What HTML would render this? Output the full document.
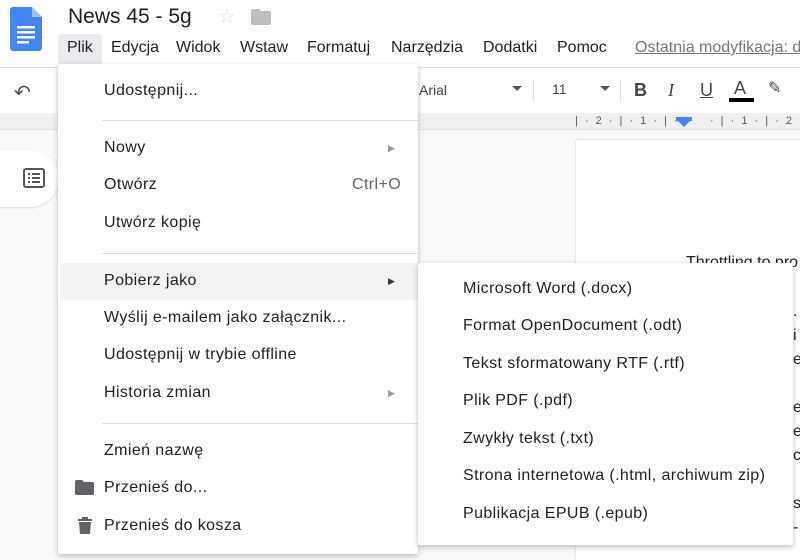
<!DOCTYPE html>
<html><head><meta charset="utf-8"><style>
*{margin:0;padding:0;box-sizing:border-box}
body{width:800px;height:547px;overflow:hidden;position:relative;background:#f8f9fa;font-family:"Liberation Sans",Arial,sans-serif;color:#202124}
.abs{position:absolute}
.top{left:0;top:0;width:800px;height:67px;background:#fff}
.tb{left:0;top:67px;width:800px;height:46px;background:#fff;border-top:1px solid #dadce0}
.ruler{left:0;top:113px;width:800px;height:17px;background:#eef0f1;border-bottom:1px solid #e0e0e0}
.page{left:576px;top:140px;width:230px;height:420px;background:#fff;box-shadow:0 0 2px #ccc}
.menu{background:#fff;box-shadow:0 2px 6px rgba(0,0,0,.25);border-radius:2px}
.it{position:absolute;font-size:16px;letter-spacing:0.4px;color:#202124;white-space:nowrap}
.sep{position:absolute;height:1px;background:#dadce0}
.mb{position:absolute;top:39px;font-size:16px;color:#202124;white-space:nowrap}
.arr{position:absolute;font-size:9px;color:#999}
</style></head><body>
<div class="abs top"></div>
<svg class="abs" style="left:10px;top:7px" width="32" height="44" viewBox="0 0 32 44"><path d="M3 0h19l10 10v31a3 3 0 0 1-3 3H3a3 3 0 0 1-3-3V3a3 3 0 0 1 3-3z" fill="#4285f4"/><path d="M22 0v10h10z" fill="#a1c2fa"/><rect x="7" y="19" width="18" height="2.5" fill="#fff"/><rect x="7" y="24" width="18" height="2.5" fill="#fff"/><rect x="7" y="29" width="18" height="2.5" fill="#fff"/><rect x="7" y="34" width="12" height="2.5" fill="#fff"/></svg>
<div class="abs" style="left:68px;top:5px;font-size:21px;color:#202124;white-space:nowrap">News 45 - 5g</div>
<div class="abs" style="left:218px;top:4px;font-size:20px;color:#ddd">☆</div>
<svg class="abs" style="left:251px;top:9px" width="20" height="16"><path d="M0 2a2 2 0 0 1 2-2h6l2 2h8a2 2 0 0 1 2 2v10a2 2 0 0 1-2 2H2a2 2 0 0 1-2-2z" fill="#bdbdbd"/></svg>
<div class="abs" style="left:58px;top:34px;width:44px;height:32px;background:#e8eaed;border-radius:3px 3px 0 0"></div>
<div class="mb" style="left:67px">Plik</div>
<div class="mb" style="left:111px">Edycja</div>
<div class="mb" style="left:176px">Widok</div>
<div class="mb" style="left:240px">Wstaw</div>
<div class="mb" style="left:307px">Formatuj</div>
<div class="mb" style="left:391px">Narzędzia</div>
<div class="mb" style="left:483px">Dodatki</div>
<div class="mb" style="left:557px">Pomoc</div>
<div class="mb" style="left:635px;color:#777;text-decoration:underline">Ostatnia modyfikacja: dzisiaj</div>
<div class="abs tb"></div>
<div class="abs" style="left:14px;top:80px;font-size:20px;color:#555">↶</div>
<div class="abs" style="left:419px;top:82px;font-size:14px;color:#444">Arial</div>
<div class="abs" style="left:512px;top:86px;border:5px solid transparent;border-top-color:#555"></div>
<div class="abs" style="left:533px;top:80px;width:1px;height:22px;background:#ddd"></div>
<div class="abs" style="left:552px;top:81px;font-size:14px;color:#444">11</div>
<div class="abs" style="left:600px;top:86px;border:5px solid transparent;border-top-color:#555"></div>
<div class="abs" style="left:620px;top:80px;width:1px;height:22px;background:#ddd"></div>
<div class="abs" style="left:634px;top:80px;font-size:18px;font-weight:bold;color:#444">B</div>
<div class="abs" style="left:668px;top:80px;font-size:18px;font-style:italic;color:#444;font-family:'Liberation Serif',serif">I</div>
<div class="abs" style="left:700px;top:80px;font-size:18px;text-decoration:underline;color:#444">U</div>
<div class="abs" style="left:734px;top:78px;font-size:18px;color:#444">A</div>
<div class="abs" style="left:729px;top:98px;width:25px;height:4px;background:#000"></div>
<div class="abs" style="left:768px;top:78px;font-size:16px;color:#444">✎</div>
<div class="abs ruler"></div>
<div class="abs" style="left:575px;top:115px;font-size:11px;color:#555;letter-spacing:2px;white-space:nowrap">| · 2 · | · 1 · | · &nbsp;&nbsp;&nbsp;&nbsp; · | · 1 · | · 2 · |</div>
<div class="abs" style="left:676px;top:117px;width:16px;height:4px;background:#4285f4"></div>
<div class="abs" style="left:678px;top:121px;border:6px solid transparent;border-top-color:#4285f4"></div>
<div class="abs page"></div>
<div class="abs" style="left:686px;top:254px;font-size:16px;color:#222;white-space:nowrap">Throttling to pro</div>
<div class="abs" style="left:793px;top:300px;font-size:16px;line-height:24px;color:#222">.<br>i<br>e<br><br>e<br>e<br>c<br><br>s<br>-</div>
<div class="abs" style="left:0;top:150px;width:58px;height:57px;background:#fff;border-radius:0 28px 28px 0;box-shadow:0 1px 2px #ddd"></div>
<svg class="abs" style="left:23px;top:168px" width="22" height="20"><rect x="1" y="1" width="20" height="18" rx="2" fill="none" stroke="#555" stroke-width="2"/><rect x="5" y="5" width="2" height="2" fill="#555"/><rect x="9" y="5" width="8" height="2" fill="#555"/><rect x="5" y="9" width="2" height="2" fill="#555"/><rect x="9" y="9" width="8" height="2" fill="#555"/><rect x="5" y="13" width="2" height="2" fill="#555"/><rect x="9" y="13" width="8" height="2" fill="#555"/></svg>
<div class="abs menu" style="left:58px;top:64px;width:360px;height:490px">
<div class="it" style="left:46px;top:18px">Udostępnij...</div>
<div class="sep" style="left:44px;top:56px;width:316px"></div>
<div class="it" style="left:46px;top:75px">Nowy</div><div class="arr" style="left:330px;top:79px">▶</div>
<div class="it" style="left:46px;top:112px">Otwórz</div><div class="it" style="left:294px;top:112px;color:#666">Ctrl+O</div>
<div class="it" style="left:46px;top:150px">Utwórz kopię</div>
<div class="sep" style="left:44px;top:189px;width:316px"></div>
<div style="position:absolute;left:2px;top:199px;width:358px;height:37px;background:#f1f3f4"></div>
<div class="it" style="left:46px;top:208px">Pobierz jako</div><div class="arr" style="left:330px;top:212px;color:#333">▶</div>
<div class="it" style="left:46px;top:245px">Wyślij e-mailem jako załącznik...</div>
<div class="it" style="left:46px;top:282px">Udostępnij w trybie offline</div>
<div class="it" style="left:46px;top:320px">Historia zmian</div><div class="arr" style="left:330px;top:324px">▶</div>
<div class="sep" style="left:44px;top:359px;width:316px"></div>
<div class="it" style="left:46px;top:378px">Zmień nazwę</div>
<svg style="position:absolute;left:17px;top:416px" width="19" height="15"><path d="M0 2a2 2 0 0 1 2-2h5l2 2h8a2 2 0 0 1 2 2v9a2 2 0 0 1-2 2H2a2 2 0 0 1-2-2z" fill="#5f6368"/></svg>
<div class="it" style="left:46px;top:415px">Przenieś do...</div>
<svg style="position:absolute;left:20px;top:453px" width="14" height="17"><rect x="0" y="2" width="14" height="2" fill="#5f6368"/><rect x="4" y="0" width="6" height="2" fill="#5f6368"/><path d="M1 5h12l-1 12H2z" fill="#5f6368"/></svg>
<div class="it" style="left:46px;top:453px">Przenieś do kosza</div>
</div>
<div class="abs menu" style="left:418px;top:263px;width:375px;height:282px">
<div class="it" style="left:45px;top:17px">Microsoft Word (.docx)</div>
<div class="it" style="left:45px;top:54px">Format OpenDocument (.odt)</div>
<div class="it" style="left:45px;top:92px">Tekst sformatowany RTF (.rtf)</div>
<div class="it" style="left:45px;top:129px">Plik PDF (.pdf)</div>
<div class="it" style="left:45px;top:167px">Zwykły tekst (.txt)</div>
<div class="it" style="left:45px;top:204px">Strona internetowa (.html, archiwum zip)</div>
<div class="it" style="left:45px;top:242px">Publikacja EPUB (.epub)</div>
</div>
</body></html>
